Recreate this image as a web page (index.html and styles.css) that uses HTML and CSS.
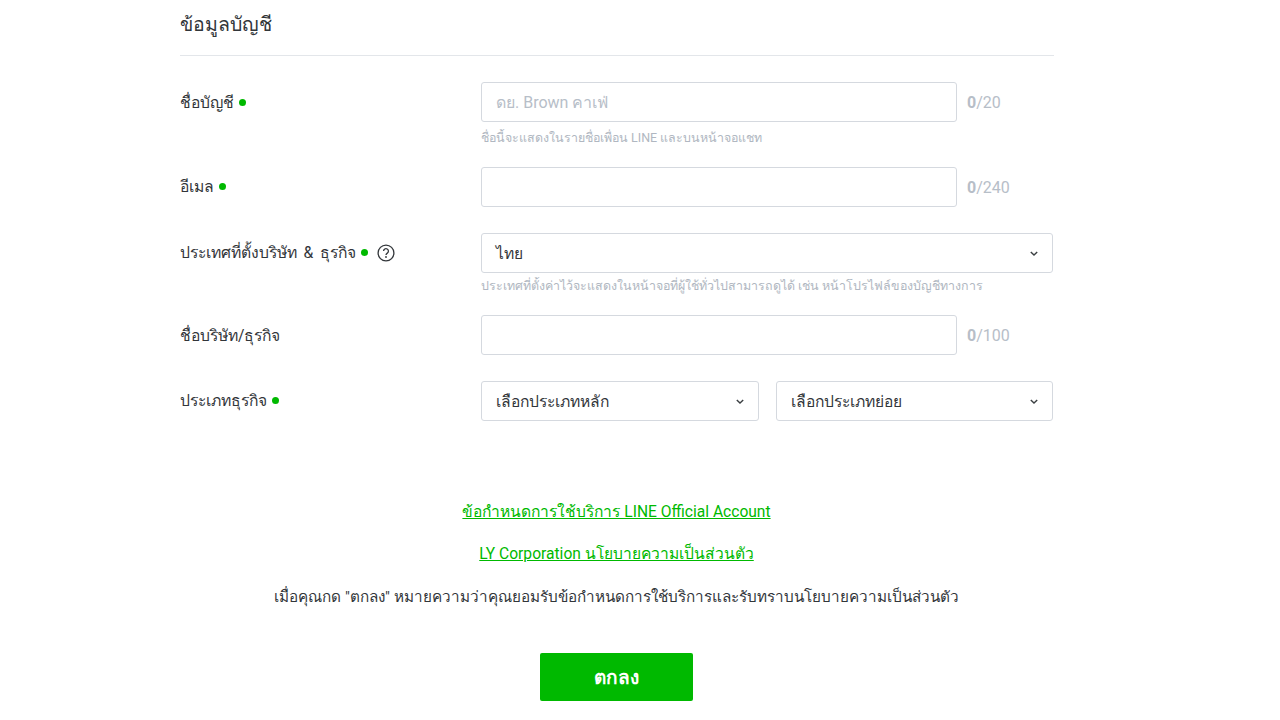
FILE: index.html
```html
<!DOCTYPE html>
<html lang="th">

<head>
    <title>ข้อมูลบัญชี</title>
    <link rel="stylesheet" href="styles.css">
</head>

<body>
    <div class="account-form">
        <h2 class="section-title">ข้อมูลบัญชี</h2>

        <div class="form-row row-name">
            <div class="form-label">ชื่อบัญชี <span class="required"></span></div>
            <div class="form-field">
                <div class="field-line">
                    <input class="text-input" type="text" placeholder="ดย. Brown คาเฟ่">
                    <div class="counter"><b>0</b>/20</div>
                </div>
                <div class="help-text">ชื่อนี้จะแสดงในรายชื่อเพื่อน LINE และบนหน้าจอแชท</div>
            </div>
        </div>

        <div class="form-row row-email">
            <div class="form-label">อีเมล <span class="required"></span></div>
            <div class="form-field">
                <div class="field-line">
                    <input class="text-input" type="text">
                    <div class="counter"><b>0</b>/240</div>
                </div>
            </div>
        </div>

        <div class="form-row row-country">
            <div class="form-label">ประเทศที่ตั้งบริษัท &amp; ธุรกิจ <span class="required"></span>
                <svg class="help-icon" viewBox="0 0 18 18" width="18" height="18">
                    <circle cx="9" cy="9" r="7.9" fill="none" stroke="#32363a" stroke-width="1.3"/>
                    <path d="M6.6 7.1a2.4 2.4 0 1 1 3.7 2c-.9.6-1.3 1-1.3 2" fill="none" stroke="#32363a" stroke-width="1.3"/>
                    <circle cx="9" cy="13" r=".9" fill="#32363a"/>
                </svg>
            </div>
            <div class="form-field">
                <div class="select-box">
                    <span>ไทย</span>
                    <svg class="select-arrow" viewBox="0 0 10 6" width="8" height="5"><path d="M1 1 5 4.8 9 1" fill="none" stroke="#3c4043" stroke-width="1.8"/></svg>
                </div>
                <div class="help-text">ประเทศที่ตั้งค่าไว้จะแสดงในหน้าจอที่ผู้ใช้ทั่วไปสามารถดูได้ เช่น หน้าโปรไฟล์ของบัญชีทางการ</div>
            </div>
        </div>

        <div class="form-row row-company">
            <div class="form-label">ชื่อบริษัท/ธุรกิจ</div>
            <div class="form-field">
                <div class="field-line">
                    <input class="text-input" type="text">
                    <div class="counter"><b>0</b>/100</div>
                </div>
            </div>
        </div>

        <div class="form-row row-type">
            <div class="form-label">ประเภทธุรกิจ <span class="required"></span></div>
            <div class="form-field select-pair">
                <div class="select-box">
                    <span>เลือกประเภทหลัก</span>
                    <svg class="select-arrow" viewBox="0 0 10 6" width="8" height="5"><path d="M1 1 5 4.8 9 1" fill="none" stroke="#3c4043" stroke-width="1.8"/></svg>
                </div>
                <div class="select-box">
                    <span>เลือกประเภทย่อย</span>
                    <svg class="select-arrow" viewBox="0 0 10 6" width="8" height="5"><path d="M1 1 5 4.8 9 1" fill="none" stroke="#3c4043" stroke-width="1.8"/></svg>
                </div>
            </div>
        </div>

        <div class="terms">
            <p><a href="#">ข้อกำหนดการใช้บริการ LINE Official Account</a></p>
            <p><a href="#">LY Corporation นโยบายความเป็นส่วนตัว</a></p>
            <p class="terms-note">เมื่อคุณกด "ตกลง" หมายความว่าคุณยอมรับข้อกำหนดการใช้บริการและรับทราบนโยบายความเป็นส่วนตัว</p>
        </div>

        <button class="submit-btn" type="button">ตกลง</button>
    </div>
</body>

</html>
```

FILE: styles.css
```css
body {
    margin: 0;
    padding: 0;
    font-family: Roboto, "Noto Sans", sans-serif;
    font-size: 16px;
    color: #32363a;
    background-color: #ffffff;
}

.account-form {
    width: 873px;
    margin-left: 180px;
}

.section-title {
    margin: 0 -1px 0 0;
    height: 56px;
    padding-top: 12px;
    box-sizing: border-box;
    border-bottom: 1px solid #e3e6ea;
    font-size: 19.5px;
    line-height: 26px;
    font-weight: 400;
}

.form-row {
    display: flex;
}

.row-name {
    margin-top: 26px;
}

.row-email {
    margin-top: 19px;
}

.row-country {
    margin-top: 26px;
}

.row-company {
    margin-top: 19px;
}

.row-type {
    margin-top: 26px;
}

.form-label {
    width: 301px;
    flex-shrink: 0;
    display: flex;
    align-items: center;
    gap: 5px;
    height: 39px;
    font-size: 15.7px;
}

.row-name .form-label {
    height: 41px;
}

.row-company .form-label {
    height: 40px;
}

.row-country .form-label {
    word-spacing: 2.5px;
}

.required {
    width: 7px;
    height: 7px;
    border-radius: 50%;
    background-color: #00b900;
}

.help-icon {
    margin-left: 4px;
}

.form-field {
    flex: 1;
    min-width: 0;
}

.field-line {
    display: flex;
    align-items: center;
}

.text-input {
    width: 476px;
    height: 40px;
    box-sizing: border-box;
    padding: 0 14px;
    border: 1px solid #d5d9df;
    border-radius: 3px;
    font-family: inherit;
    font-size: 16px;
    color: #32363a;
    outline: none;
}

.text-input::placeholder {
    color: #b7bec8;
}

.counter {
    margin-left: 10px;
    color: #b7bec8;
    font-size: 16px;
}

.help-text {
    margin-top: 6px;
    font-size: 12.45px;
    line-height: 20px;
    color: #b0b7c1;
}

.row-country .help-text {
    margin-top: 3px;
}

.select-box {
    display: flex;
    justify-content: space-between;
    align-items: center;
    width: 572px;
    height: 40px;
    box-sizing: border-box;
    padding: 0 14px;
    border: 1px solid #d5d9df;
    border-radius: 3px;
    font-size: 15.6px;
}

.select-pair {
    display: flex;
    gap: 17px;
}

.select-pair .select-box {
    width: 278px;
}

.terms {
    margin-top: 79px;
    text-align: center;
    font-size: 15.6px;
}

.terms p {
    margin: 0 0 17px;
    line-height: 25px;
}

.terms a {
    color: #00b900;
}

.terms .terms-note {
    margin-top: 18px;
    font-size: 15.27px;
}

.submit-btn {
    display: block;
    width: 153px;
    height: 48px;
    margin: 43px auto 0;
    border: none;
    border-radius: 2px;
    background-color: #00b900;
    color: #ffffff;
    font-family: inherit;
    font-size: 19px;
    font-weight: 700;
}
```
